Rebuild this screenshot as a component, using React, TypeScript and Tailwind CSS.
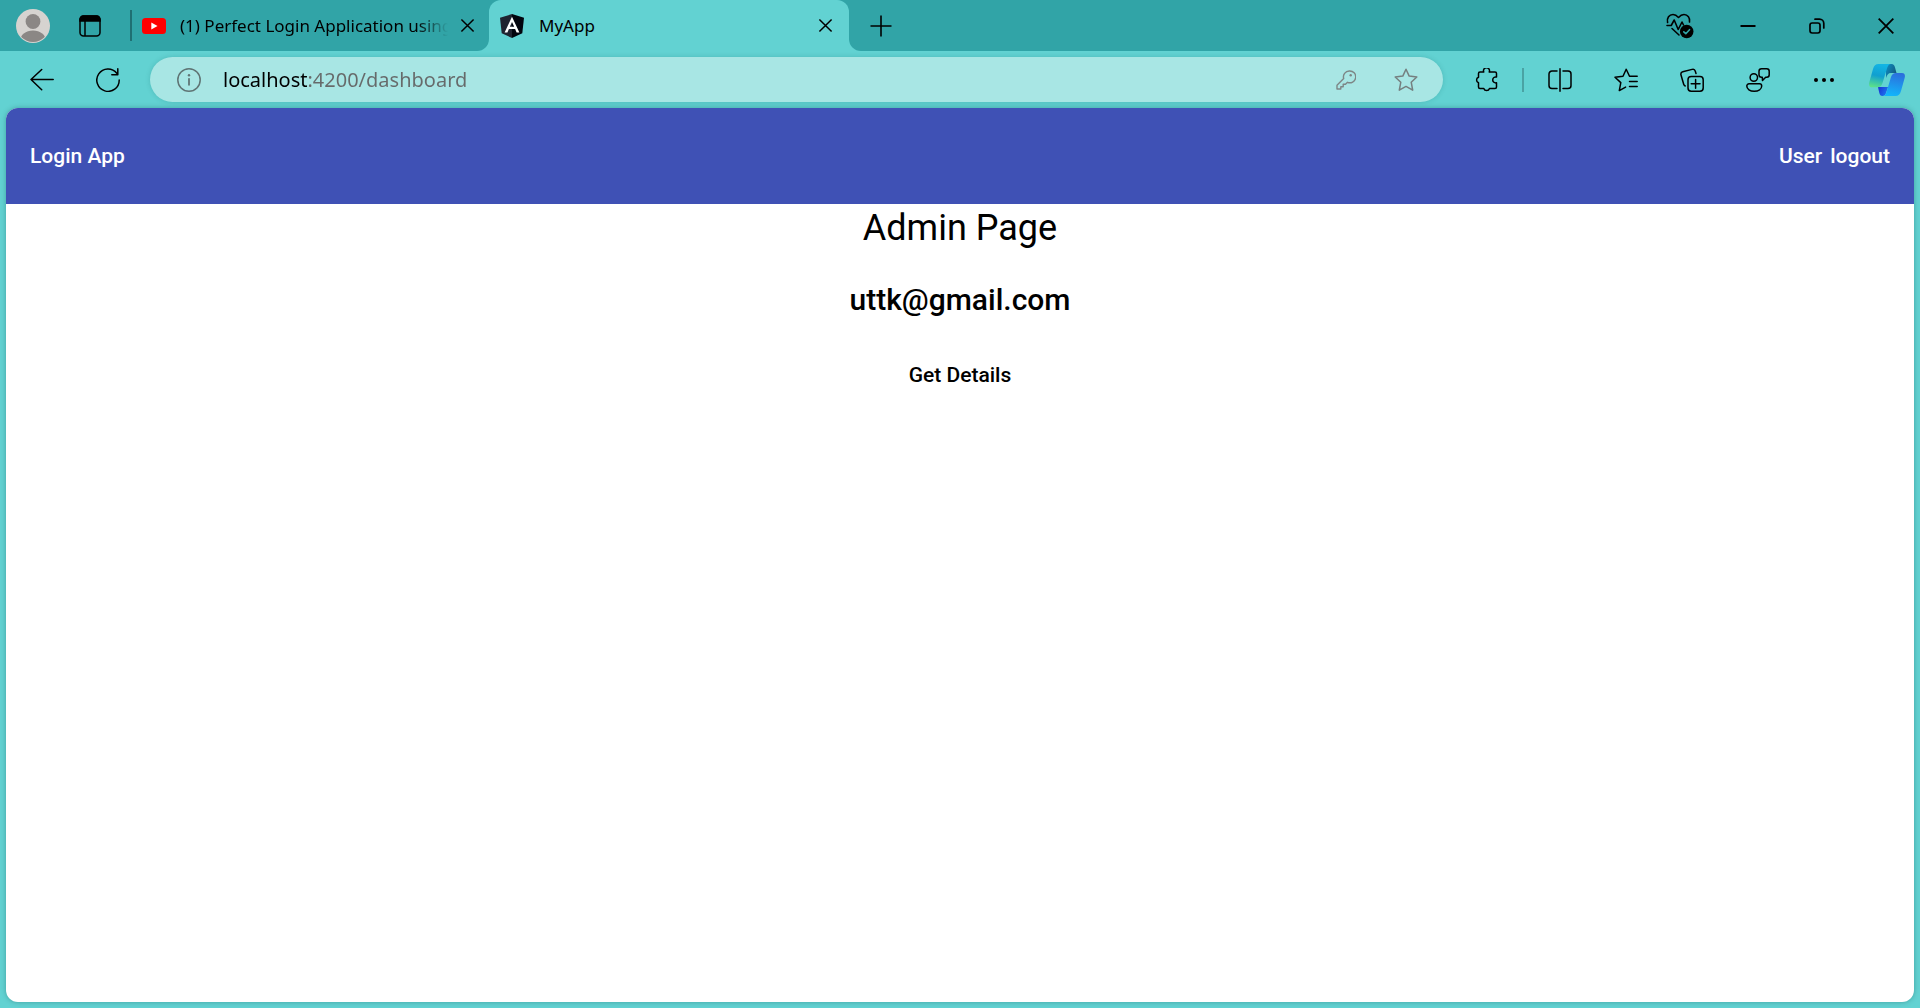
import type { ReactNode } from "react";

type IconProps = { children: ReactNode; className?: string; stroke?: number };

function Icon({ children, className = "size-6", stroke = 1.5 }: IconProps) {
  return (
    <svg
      viewBox="0 0 24 24"
      className={`shrink-0 ${className}`}
      fill="none"
      stroke="currentColor"
      strokeWidth={stroke}
      strokeLinecap="round"
      strokeLinejoin="round"
      aria-hidden="true"
    >
      {children}
    </svg>
  );
}

type IconButtonProps = { label: string; className: string; children: ReactNode };

function IconButton({ label, className, children }: IconButtonProps) {
  return (
    <button type="button" aria-label={label} className={`flex h-full shrink-0 items-center justify-center ${className}`}>
      {children}
    </button>
  );
}

function CloseIcon({ className }: { className: string }) {
  return (
    <svg viewBox="0 0 16 16" className={className} fill="none" stroke="currentColor" strokeWidth={1.6} aria-hidden="true">
      <path d="M1.5 1.5l13 13M14.5 1.5l-13 13" />
    </svg>
  );
}

function TabStrip() {
  return (
    <div className="flex h-[51px] items-center bg-[#31a4a7]">
      <IconButton label="Profile" className="ml-4">
        <svg viewBox="0 0 34 34" className="size-[34px]" aria-hidden="true">
          <clipPath id="avatar">
            <circle cx="17" cy="17" r="16" />
          </clipPath>
          <circle cx="17" cy="17" r="17" fill="#d6d3d0" />
          <g clipPath="url(#avatar)" fill="#8b8785">
            <circle cx="17" cy="12.5" r="7.4" />
            <ellipse cx="17" cy="32" rx="13" ry="10.5" />
          </g>
        </svg>
      </IconButton>
      <IconButton label="Workspaces" className="w-20">
        <svg viewBox="0 0 22 22" className="size-[22px]" fill="none" stroke="#000" strokeWidth="1.5" aria-hidden="true">
          <rect x="1" y="1" width="20" height="20" rx="3.5" />
          <path d="M6 6v15" />
          <path d="M1 6V4.500a3.500 3.500 0 0 1 3.500-3.500h13A3.500 3.500 0 0 1 21 4.500V6z" fill="#000" />
        </svg>
      </IconButton>
      <div className="h-[31px] w-0.5 bg-[#1f7073]" />

      <div className="flex h-full w-[357px] items-center pl-2.5">
        <svg viewBox="0 0 24 16" className="h-4 w-6 shrink-0" aria-hidden="true">
          <rect width="24" height="16" rx="3.500" fill="#f00" />
          <path d="M9.300 4.500v7l6.200-3.500z" fill="#fff" />
        </svg>
        <span className="ml-3.5 w-[268px] overflow-hidden text-[17px] leading-6 whitespace-nowrap [mask-image:linear-gradient(to_right,black_88%,transparent)]">
          (1) Perfect Login Application using
        </span>
        <IconButton label="Close tab" className="w-[38px]">
          <CloseIcon className="size-[15px]" />
        </IconButton>
      </div>

      <div className="relative flex h-full w-[360px] items-center rounded-t-[12px] bg-[#62d2d2] pl-[11px]">
        <span className="absolute bottom-0 -left-3 size-3 bg-[#62d2d2]">
          <span className="block size-full rounded-br-[12px] bg-[#31a4a7]" />
        </span>
        <span className="absolute -right-3 bottom-0 size-3 bg-[#62d2d2]">
          <span className="block size-full rounded-bl-[12px] bg-[#31a4a7]" />
        </span>
        <svg viewBox="0 0 24 24" className="size-6 shrink-0" aria-hidden="true">
          <path d="M12 0L0 3.800l1.700 15.500L12 24z" fill="#1f2430" />
          <path d="M12 0l12 3.800-1.700 15.500L12 24z" fill="#02050e" />
          <path d="M12 2.800L4.600 18.500h2.800l1.500-3.600h6.200l1.500 3.600h2.800zm0 5.100l2.200 4.900H9.800z" fill="#fff" />
        </svg>
        <span className="ml-[15px] flex-1 text-[17px] leading-6">MyApp</span>
        <IconButton label="Close tab" className="w-12">
          <CloseIcon className="size-[15px]" />
        </IconButton>
      </div>

      <IconButton label="New tab" className="ml-2 w-12">
        <svg viewBox="0 0 22 22" className="size-[22px]" stroke="#000" strokeWidth="1.600" aria-hidden="true">
          <path d="M11 .5v21M.5 11h21" />
        </svg>
      </IconButton>

      <div className="flex-1" />

      <IconButton label="Browser essentials" className="w-[66px]">
        <svg viewBox="0 0 28 26" className="h-[26px] w-7" fill="none" stroke="#000" strokeWidth="1.600" strokeLinecap="round" strokeLinejoin="round" aria-hidden="true">
          <path d="M1.600 9.500C.6 5 3.200 1.500 7 1.500c2.500 0 4 1.300 5.500 3 1.500-1.700 3-3 5.500-3 3.700 0 6.300 3.400 5.500 7.500" />
          <path d="M1 12.500h4.200l3-5.500 4 9.500L16 9l1.500 3" />
          <path d="M6 15.500l7 6.500" />
          <circle cx="20.700" cy="18.500" r="6.800" fill="#000" stroke="none" />
          <path d="M17.800 18.800l2 1.900 3.700-4" stroke="#31a4a7" />
        </svg>
      </IconButton>
      <IconButton label="Minimize" className="w-[69px]">
        <svg viewBox="0 0 16 16" className="size-4" stroke="#000" strokeWidth="2" aria-hidden="true">
          <path d="M.5 8h15" />
        </svg>
      </IconButton>
      <IconButton label="Restore" className="w-[69px]">
        <svg viewBox="0 0 16 16" className="size-4" fill="none" stroke="#000" strokeWidth="1.700" strokeLinecap="round" aria-hidden="true">
          <rect x="1" y="5" width="10" height="10" rx="2.200" />
          <path d="M6 1.200h4.500A4.300 4.300 0 0 1 14.800 5.500V10" />
        </svg>
      </IconButton>
      <IconButton label="Close window" className="w-[69px]">
        <CloseIcon className="size-[18px]" />
      </IconButton>
    </div>
  );
}

function AddressBar() {
  return (
    <form className="flex h-[45px] min-w-0 flex-1 items-center rounded-full bg-[#a8e6e4] shadow-[0_0_5px_rgba(0,90,90,0.2)]">
      <IconButton label="View site information" className="w-[73px] pl-1 text-[#5f7474]">
        <Icon>
          <circle cx="12" cy="12" r="11.200" />
          <path d="M12 10.800v6" strokeWidth="1.800" />
          <circle cx="12" cy="7.300" r="1.200" fill="currentColor" stroke="none" />
        </Icon>
      </IconButton>
      <input
        type="text"
        aria-label="Address"
        defaultValue="localhost:4200/dashboard"
        className="min-w-0 flex-1 bg-[linear-gradient(to_right,#000_84px,#666a6a_84px)] bg-clip-text text-xl leading-7 text-[#666a6a] outline-none [-webkit-text-fill-color:transparent]"
      />
      <IconButton label="Saved passwords" className="w-[60px] text-[#7d8686]">
        <svg viewBox="0 0 20 20" className="size-5" fill="none" stroke="currentColor" strokeWidth="1.400" strokeLinejoin="round" aria-hidden="true">
          <path d="M13.300 1a5.800 5.800 0 0 0-5.600 7.500L1 15.200V19h3.800v-2.300h2.400v-2.400h2.300l2-2A5.900 5.900 0 1 0 13.300 1z" />
          <circle cx="14.700" cy="5.300" r="1.200" fill="currentColor" stroke="none" />
        </svg>
      </IconButton>
      <IconButton label="Add to favorites" className="mr-[7px] w-[60px] text-[#757f7f]">
        <Icon>
          <path d="M12 1.200l3.200 6.900 7.600.9-5.600 5.200 1.500 8L12 18.400l-6.700 3.800 1.500-8L1.200 9l7.600-.9z" />
        </Icon>
      </IconButton>
    </form>
  );
}

function CopilotIcon() {
  return (
    <svg viewBox="0 0 36 32" className="h-8 w-9" aria-hidden="true">
      <defs>
        <linearGradient id="cp-left" x1="0.500" y1="0" x2="0.300" y2="1">
          <stop offset="0" stopColor="#13b5e4" />
          <stop offset="0.500" stopColor="#109fd0" />
          <stop offset="1" stopColor="#5ce08a" />
        </linearGradient>
        <linearGradient id="cp-right" x1="0.600" y1="0" x2="0.400" y2="1">
          <stop offset="0" stopColor="#2b6fdc" />
          <stop offset="1" stopColor="#12b6fb" />
        </linearGradient>
        <linearGradient id="cp-top" x1="0" y1="0" x2="1" y2="0.600">
          <stop offset="0" stopColor="#0f8fc4" />
          <stop offset="1" stopColor="#135a80" />
        </linearGradient>
        <linearGradient id="cp-bottom" x1="0" y1="0" x2="1" y2="0.500">
          <stop offset="0" stopColor="#1a2fd0" />
          <stop offset="1" stopColor="#1b74f0" />
        </linearGradient>
      </defs>
      <path d="M17 0h5.500c2 0 3 1.500 3.500 3.500L27.500 9H22c-3 0-4 2-5 5z" fill="url(#cp-top)" />
      <path d="M9 23h10l-2 6c-.7 2-1.500 3-3.500 3-2 0-2.600-1-3.200-3z" fill="url(#cp-bottom)" />
      <path d="M9.500 0H22c-2 .2-3 1.500-3.700 3.500L13.500 19c-1 3-2.500 4.300-5 4.300H3c-2.500 0-3.500-2-2.700-5L4 5C5 1.500 6.500 0 9.500 0z" fill="url(#cp-left)" />
      <path d="M27 9h6c2.600 0 3.400 2 2.700 4.800L32 27c-1 3.500-2.600 5-5.500 5H13.800c2-.2 3-1.500 3.600-3.500L22 13c.9-2.900 2.500-4 5-4z" fill="url(#cp-right)" />
    </svg>
  );
}

function Toolbar() {
  return (
    <div className="flex h-[57px] items-center">
      <IconButton label="Back" className="ml-2 w-[67px]">
        <Icon>
          <path d="M23.200 11.500H1M11.700 1.500L1 11.500l10.700 10.300" />
        </Icon>
      </IconButton>
      <IconButton label="Refresh" className="mr-2.5 w-[65px]">
        <Icon>
          <path d="M20.800 5.200A11.200 11.200 0 1 0 23.200 12M21.800 .8v6h-6" />
        </Icon>
      </IconButton>
      <AddressBar />
      <IconButton label="Extensions" className="ml-2.5 w-[66px]">
        <Icon>
          <path d="M4.500 7V5.500a1.500 1.500 0 0 1 1.500-1.500h3.800a3 3 0 1 1 5.400 0H21a1.500 1.500 0 0 1 1.500 1.500V9a3 3 0 1 0 0 5.800v4.200a1.500 1.500 0 0 1-1.500 1.500h-5.500a3 3 0 0 1-5.700 0H6a1.500 1.500 0 0 1-1.500-1.500v-4.200a3 3 0 0 1 0-5.600z" />
        </Icon>
      </IconButton>
      <div className="mx-[3px] h-6 w-0.5 bg-[#4aa3a4]" />
      <IconButton label="Split screen" className="w-[66px]">
        <Icon>
          <path d="M12 .8v22.400M9 3H4a3 3 0 0 0-3 3v11.500a3 3 0 0 0 3 3h5M15 3h5a3 3 0 0 1 3 3v11.500a3 3 0 0 1-3 3h-5" />
        </Icon>
      </IconButton>
      <IconButton label="Favorites" className="w-[66px]">
        <Icon>
          <path d="M15.500 8.300L12.200 1.200 9 8.300l-8 1 5.800 5.300-1.500 8 6.300-3.500M15.500 8.300h7.700M15.500 13.500h7.700M15.500 18.500h7.700" />
        </Icon>
      </IconButton>
      <IconButton label="Collections" className="w-[66px]">
        <Icon>
          <rect x="8" y="8.500" width="15.200" height="14.700" rx="3.200" />
          <path d="M15.600 11.500v8.700M11.200 15.800H20M16 5.500l-.7-2.300a2.600 2.600 0 0 0-3.200-1.800L2.800 3.800A2.600 2.600 0 0 0 1 7l2.700 9.300a2.600 2.600 0 0 0 1.500 1.700" />
        </Icon>
      </IconButton>
      <IconButton label="Send feedback" className="w-[66px]">
        <Icon>
          <circle cx="7.800" cy="9.500" r="3.700" />
          <path d="M3 15.800h10.500a2.200 2.200 0 0 1 2.200 2.200c0 3.200-3.300 5.200-7.500 5.200S.8 21.200.8 18A2.200 2.200 0 0 1 3 15.800zM15.500 .8h5.200a2.500 2.500 0 0 1 2.500 2.500v3.500a2.500 2.500 0 0 1-2.500 2.500h-1L16.500 12.500l-.2-3.200h-.8A2.500 2.500 0 0 1 13 6.800V3.300A2.500 2.500 0 0 1 15.500.8z" />
        </Icon>
      </IconButton>
      <IconButton label="Settings and more" className="w-[66px]">
        <Icon>
          <g fill="currentColor" stroke="none">
            <circle cx="4" cy="12" r="2" />
            <circle cx="12" cy="12" r="2" />
            <circle cx="20" cy="12" r="2" />
          </g>
        </Icon>
      </IconButton>
      <IconButton label="Copilot" className="mr-[3px] w-[60px]">
        <CopilotIcon />
      </IconButton>
    </div>
  );
}

export default function App() {
  return (
    <div className="flex min-h-screen flex-col bg-[#62d2d2] font-['Noto_Sans',sans-serif] text-black">
      <TabStrip />
      <Toolbar />
      <div className="mx-1.5 mb-1.5 flex flex-1 flex-col overflow-hidden rounded-[12px] bg-white font-['Roboto',sans-serif] shadow-[0_0_5px_rgba(0,70,70,0.35)]">
        <header className="flex h-24 items-center justify-between bg-[#3f51b5] px-6 text-[21px] leading-9 font-medium text-white">
          <span>Login App</span>
          <nav className="flex gap-2">
            <button type="button">User</button>
            <button type="button">logout</button>
          </nav>
        </header>
        <main className="flex flex-col items-center gap-6">
          <h1 className="text-4xl leading-12">Admin Page</h1>
          <h2 className="text-3xl leading-12 font-medium">uttk@gmail.com</h2>
          <button type="button" className="h-14 px-6 text-[21px] font-medium">
            Get Details
          </button>
        </main>
      </div>
    </div>
  );
}
